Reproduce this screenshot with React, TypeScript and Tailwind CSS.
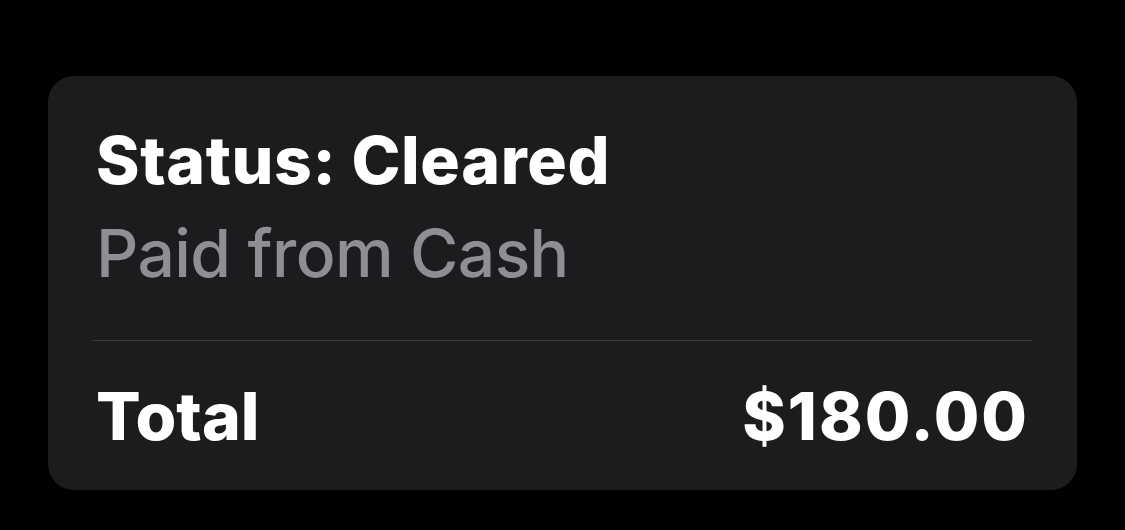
export default function App() {
  return (
    <div className="w-[1125px] h-[530px] bg-black pt-[76px] pl-[48px]">
      <div
        className="w-[1029px] h-[414px] bg-[#1c1c1e] rounded-[26px] px-[45px] pt-[38px] text-[66px] leading-[93px]"
        style={{ fontFamily: "Inter, 'Noto Sans', sans-serif" }}
      >
        <div className="px-[3px]">
          <div className="font-extrabold text-white tracking-[0.6px]">Status: Cleared</div>
          <div className="font-medium text-[#8e8e93] tracking-[-0.6px]">Paid from Cash</div>
        </div>
        <div className="h-px bg-[#3a3a3c] mt-[40px]" />
        <div className="flex justify-between px-[3px] mt-[29px] font-extrabold text-white">
          <span className="tracking-[0px]">Total</span>
          <span className="tracking-[2px]">$180.00</span>
        </div>
      </div>
    </div>
  );
}
